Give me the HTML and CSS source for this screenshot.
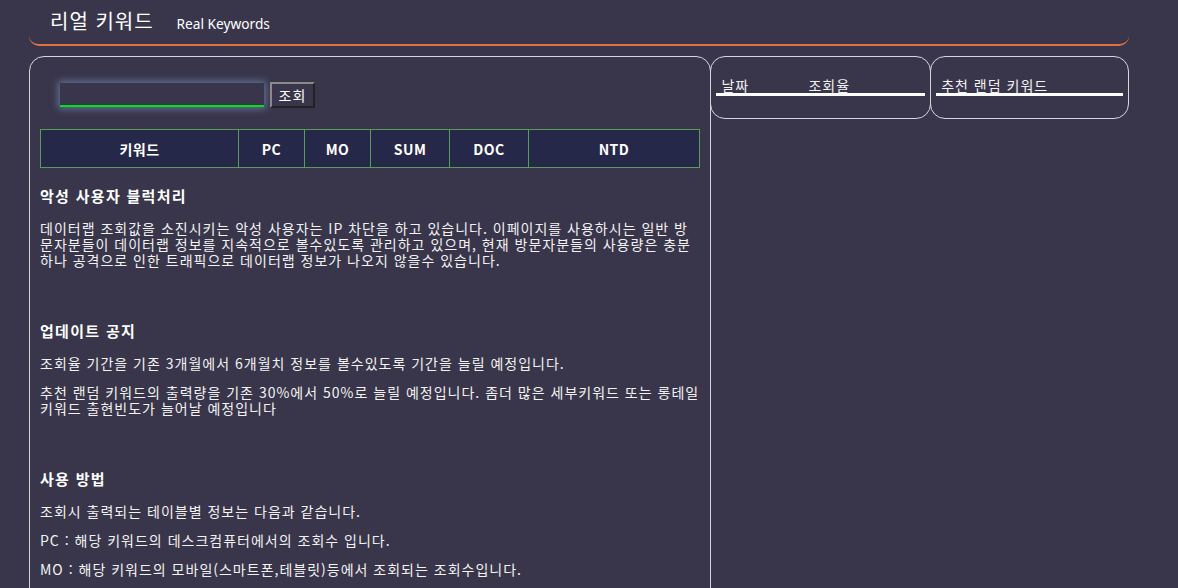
FILE: index.html
```html
<html lang="ko">
<head>
    <title>리얼 키워드 - Real Keywords</title>
    <meta http-equiv="Content-Type" content="text/html; charset=utf-8">
    <link rel="stylesheet" href="styles.css">
</head>

<body id="background">
<div id="wrap">
    <header>
        <span id="title">리얼 키워드</span>
        <span class="subtitle">Real Keywords</span>
    </header>

    <div id="columns">
        <div class="box" id="mainBox">
            <div class="search">
                <input type="text" id="inarea" spellcheck="false" autocomplete="off">
                <input type="button" class="btn" value="조회">
            </div>
            <table id="tableArea">
                <tr>
                    <th class="colKey">키워드</th>
                    <th class="colPc">PC</th>
                    <th class="colMo">MO</th>
                    <th class="colSum">SUM</th>
                    <th class="colDoc">DOC</th>
                    <th class="colNtd">NTD</th>
                </tr>
            </table>

            <div class="notice">
                <h3>악성 사용자 블럭처리</h3>
                <p>데이터랩 조회값을 소진시키는 악성 사용자는 IP 차단을 하고 있습니다. 이페이지를 사용하시는 일반 방문자분들이 데이터랩 정보를 지속적으로 볼수있도록 관리하고 있으며, 현재 방문자분들의 사용량은 충분하나 공격으로 인한 트래픽으로 데이터랩 정보가 나오지 않을수 있습니다.</p>
            </div>
            <div class="notice">
                <h3>업데이트 공지</h3>
                <p>조회율 기간을 기존 3개월에서 6개월치 정보를 볼수있도록 기간을 늘릴 예정입니다.</p>
                <p>추천 랜덤 키워드의 출력량을 기존 30%에서 50%로 늘릴 예정입니다. 좀더 많은 세부키워드 또는 롱테일 키워드 출현빈도가 늘어날 예정입니다</p>
            </div>
            <div class="notice">
                <h3>사용 방법</h3>
                <p>조회시 출력되는 테이블별 정보는 다음과 같습니다.</p>
                <p>PC : 해당 키워드의 데스크컴퓨터에서의 조회수 입니다.</p>
                <p>MO : 해당 키워드의 모바일(스마트폰,테블릿)등에서 조회되는 조회수입니다.</p>
            </div>
        </div>

        <div class="box sideBox" id="rateBox">
            <table class="sideTable">
                <tr>
                    <th class="colDate">날짜</th>
                    <th>조회율</th>
                </tr>
            </table>
        </div>

        <div class="box sideBox" id="randomBox">
            <table class="sideTable">
                <tr>
                    <th>추천 랜덤 키워드</th>
                </tr>
            </table>
        </div>
    </div>
</div>
</body>
</html>
```

FILE: styles.css
```css
html, body{
    margin: 0;
    padding: 0;
}
#background{
    background-color: #39364b;
    color: #f2f2f2;
    font-family: "Noto Sans CJK KR", "Noto Sans", sans-serif;
    font-size: 14px;
}
#wrap{
    width: 1100px;
    margin-left: 29px;
}
header{
    display: flex;
    align-items: baseline;
    gap: 23px;
    height: 46px;
    box-sizing: border-box;
    padding: 6px 21px 0;
    border-bottom: 2px solid #e2733f;
    border-radius: 0 0 10px 10px;
}
#title{
    font-size: 20px;
    letter-spacing: 1px;
    color: #fff;
}
.subtitle{
    font-family: "Noto Sans", sans-serif;
    font-size: 13.7px;
    color: #fff;
}
#columns{
    display: flex;
    align-items: flex-start;
    margin-top: 10px;
}
.box{
    border: 1px solid #d6d6dc;
    border-radius: 15px;
    box-sizing: border-box;
}
#mainBox{
    width: 683px;
    padding: 0 10px 20px;
    margin-right: -1px;
}
.search{
    display: flex;
    align-items: center;
    gap: 6px;
    padding: 25px 0 0 20px;
}
#inarea{
    width: 204px;
    height: 24px;
    box-sizing: border-box;
    background-color: #39364b;
    color: #fff;
    border: none;
    border-bottom: 2px solid #00e11a;
    box-shadow: 0 0 7px 2px rgba(130, 160, 210, 0.55);
    outline: none;
    font-size: 14px;
}
.btn{
    width: 45px;
    height: 26px;
    box-sizing: border-box;
    background-color: #39364b;
    color: #fff;
    border: 2px solid;
    border-color: #8a8a8a #222 #222 #8a8a8a;
    font-family: "Noto Sans CJK KR", sans-serif;
    font-size: 14px;
    letter-spacing: 1px;
    padding: 0;
}
#tableArea{
    width: 660px;
    margin-top: 21px;
    border-collapse: collapse;
    background-color: #262849;
    table-layout: fixed;
}
#tableArea th{
    height: 38px;
    border: 1px solid #5c9a57;
    font-size: 14px;
    font-weight: bold;
    letter-spacing: 0.5px;
    color: #fff;
    padding: 0;
}
.colKey{ width: 197px; }
.colPc{ width: 65px; }
.colMo{ width: 65px; }
.colSum{ width: 78px; }
.colDoc{ width: 78px; }
.notice{
    margin-top: 18px;
    letter-spacing: 1px;
}
.notice + .notice{
    margin-top: 53px;
}
.notice h3{
    font-size: 15px;
    line-height: 20px;
    letter-spacing: 1.3px;
    margin: 0 0 14px;
    color: #fff;
}
.notice p{
    font-size: 14px;
    line-height: 16px;
    margin: 0 0 13px;
}
.sideBox{
    height: 63px;
    padding: 20px 5px 0;
}
#rateBox{
    width: 221px;
    margin-right: -1px;
}
#randomBox{
    width: 199px;
}
.sideTable{
    width: 100%;
    border-collapse: collapse;
}
.sideTable th{
    text-align: left;
    font-weight: normal;
    font-size: 14px;
    line-height: 16px;
    letter-spacing: 1px;
    padding: 0 0 0 5px;
    border-bottom: 3px solid #fff;
}
.colDate{
    width: 82px;
}
```
